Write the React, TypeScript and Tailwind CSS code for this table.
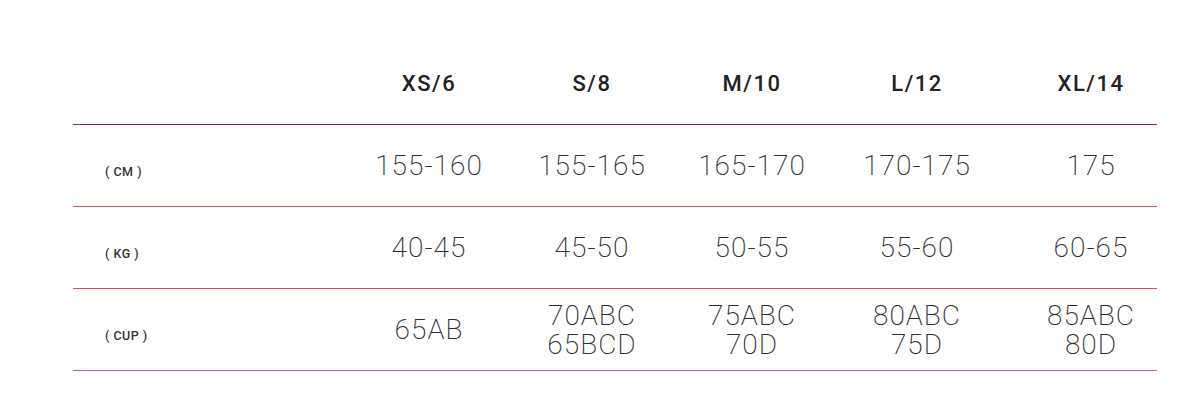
import React from "react";

interface SizeRow {
  label: string;
  values: string[][];
}

const sizes = ["XS/6", "S/8", "M/10", "L/12", "XL/14"];

const rows: SizeRow[] = [
  { label: "( CM )", values: [["155-160"], ["155-165"], ["165-170"], ["170-175"], ["175"]] },
  { label: "( KG )", values: [["40-45"], ["45-50"], ["50-55"], ["55-60"], ["60-65"]] },
  {
    label: "( CUP )",
    values: [["65AB"], ["70ABC", "65BCD"], ["75ABC", "70D"], ["80ABC", "75D"], ["85ABC", "80D"]],
  },
];

// the last column sits a bit right of its cell centre in the original
const cellPad = ["", "", "", "", "pl-[22px]"];

const gridCols = "grid grid-cols-[274px_164px_162px_158px_172px_154px]";

const App: React.FC = () => {
  return (
    <div className="w-[1200px] h-[401px] bg-white font-['Roboto','Liberation_Sans',sans-serif]">
      <div className="ml-[73px] w-[1084px]">
        {/* header */}
        <div className={`${gridCols} h-[125px] border-b border-[#952f3c]`}>
          <div />
          {sizes.map((s, i) => (
            <div
              key={s}
              className={`flex justify-center pt-[71px] text-[22px] leading-[26px] font-medium tracking-[1.5px] text-[#222] ${cellPad[i]}`}
            >
              {s}
            </div>
          ))}
        </div>

        {rows.map((row, r) => (
          <div
            key={row.label}
            className={`${gridCols} h-[82px] border-b ${r === 2 ? "border-[#c9636a]" : "border-[#d6525c]"}`}
          >
            <div className="flex items-center pl-[32px] pt-[14px] text-[12.5px] font-medium tracking-[0.5px] text-[#333]">
              {row.label}
            </div>
            {row.values.map((v, i) => (
              <div
                key={i}
                className={`flex flex-col items-center justify-center text-[28px] font-extralight leading-[29px] tracking-[1px] text-[#2e2e2e] ${cellPad[i]}`}
              >
                {v.map((line) => (
                  <span key={line}>{line}</span>
                ))}
              </div>
            ))}
          </div>
        ))}
      </div>
    </div>
  );
};

export default App;
